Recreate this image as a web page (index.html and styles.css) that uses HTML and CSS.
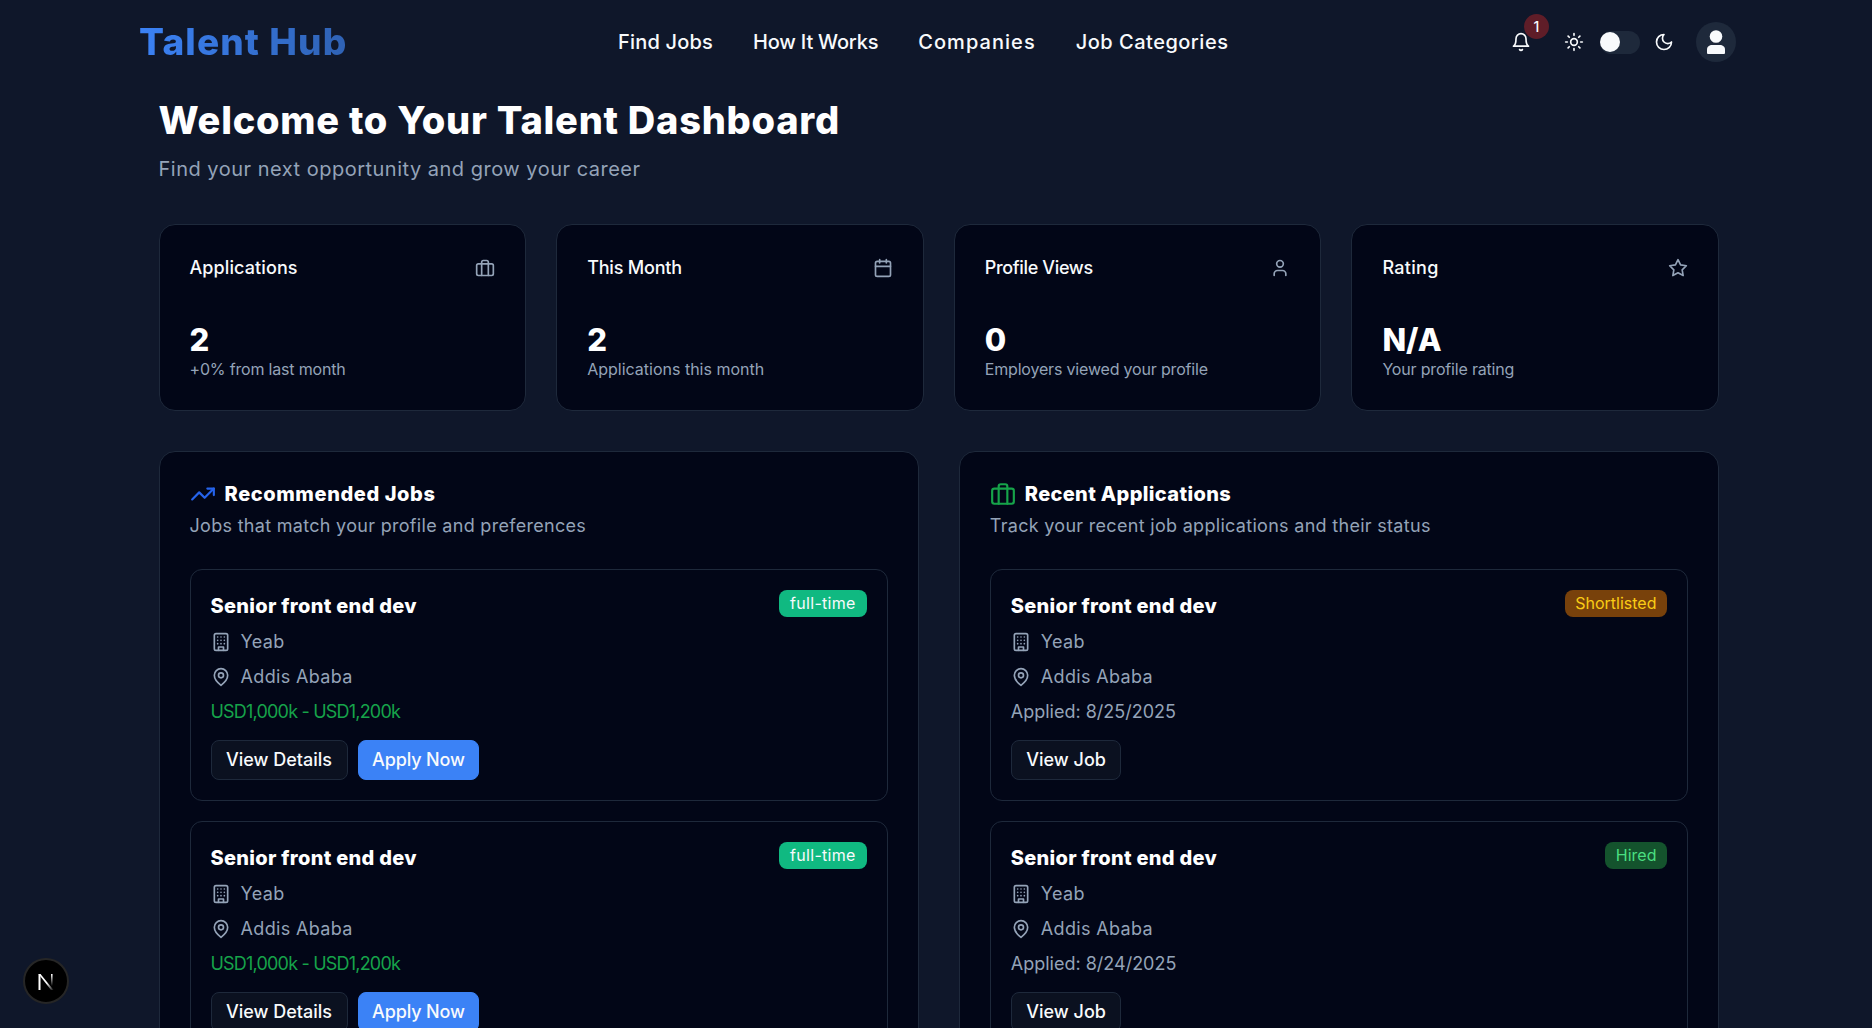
FILE: index.html
```html
<!DOCTYPE html>
<html>
<head>
<meta name="viewport" content="width=device-width, initial-scale=1">
<title>Talent Hub</title>
<link rel="stylesheet" href="styles.css">
</head>
<body>

<svg class="sprites" xmlns="http://www.w3.org/2000/svg">
  <symbol id="i-bell" viewBox="0 0 24 24"><path d="M6 8a6 6 0 0 1 12 0c0 7 3 9 3 9H3s3-2 3-9"/><path d="M10.3 21a1.94 1.94 0 0 0 3.4 0"/></symbol>
  <symbol id="i-sun" viewBox="0 0 24 24"><circle cx="12" cy="12" r="4"/><path d="M12 2v2"/><path d="M12 20v2"/><path d="m4.93 4.93 1.41 1.41"/><path d="m17.66 17.66 1.41 1.41"/><path d="M2 12h2"/><path d="M20 12h2"/><path d="m6.34 17.66-1.41 1.41"/><path d="m19.07 4.93-1.41 1.41"/></symbol>
  <symbol id="i-moon" viewBox="0 0 24 24"><path d="M12 3a6 6 0 0 0 9 9 9 9 0 1 1-9-9Z"/></symbol>
  <symbol id="i-briefcase" viewBox="0 0 24 24"><rect width="20" height="14" x="2" y="7" rx="2" ry="2"/><path d="M16 21V5a2 2 0 0 0-2-2h-4a2 2 0 0 0-2 2v16"/></symbol>
  <symbol id="i-calendar" viewBox="0 0 24 24"><rect width="18" height="18" x="3" y="4" rx="2" ry="2"/><path d="M16 2v4"/><path d="M8 2v4"/><path d="M3 10h18"/></symbol>
  <symbol id="i-user" viewBox="0 0 24 24"><path d="M19 21v-2a4 4 0 0 0-4-4H9a4 4 0 0 0-4 4v2"/><circle cx="12" cy="7" r="4"/></symbol>
  <symbol id="i-star" viewBox="0 0 24 24"><polygon points="12 2 15.09 8.26 22 9.27 17 14.14 18.18 21.02 12 17.77 5.82 21.02 7 14.14 2 9.27 8.91 8.26 12 2"/></symbol>
  <symbol id="i-trending" viewBox="0 0 24 24"><polyline points="22 7 13.5 15.5 8.5 10.5 2 17"/><polyline points="16 7 22 7 22 13"/></symbol>
  <symbol id="i-building" viewBox="0 0 24 24"><rect width="16" height="20" x="4" y="2" rx="2" ry="2"/><path d="M9 22v-4h6v4"/><path d="M8 6h.01"/><path d="M16 6h.01"/><path d="M12 6h.01"/><path d="M12 10h.01"/><path d="M12 14h.01"/><path d="M16 10h.01"/><path d="M16 14h.01"/><path d="M8 10h.01"/><path d="M8 14h.01"/></symbol>
  <symbol id="i-pin" viewBox="0 0 24 24"><path d="M20 10c0 6-8 12-8 12s-8-6-8-12a8 8 0 0 1 16 0Z"/><circle cx="12" cy="10" r="3"/></symbol>
</svg>

<header class="topbar">
  <a class="logo" href="#">Talent Hub</a>
  <nav class="nav">
    <a href="#">Find Jobs</a>
    <a href="#">How It Works</a>
    <a href="#">Companies</a>
    <a href="#">Job Categories</a>
  </nav>
  <div class="actions">
    <div class="bell">
      <svg class="icon icon-20"><use href="#i-bell"/></svg>
      <span class="bell-count">1</span>
    </div>
    <svg class="icon icon-20 sun"><use href="#i-sun"/></svg>
    <div class="toggle"><span class="knob"></span></div>
    <svg class="icon icon-20 moon"><use href="#i-moon"/></svg>
    <div class="avatar">
      <svg width="24" height="24" viewBox="0 0 24 24" fill="#f8fafc"><circle cx="12" cy="6.5" r="6.3"/><path d="M3 23v-3.500C3 16.500 5.500 15 8 15h8c2.500 0 5 1.500 5 4.500V23a1 1 0 0 1-1 1H4a1 1 0 0 1-1-1Z"/></svg>
    </div>
  </div>
</header>

<main class="page">
  <h1 class="title">Welcome to Your Talent Dashboard</h1>
  <p class="subtitle">Find your next opportunity and grow your career</p>

  <section class="stats">
    <div class="stat">
      <div class="stat-top"><span class="stat-label">Applications</span><svg class="icon icon-20"><use href="#i-briefcase"/></svg></div>
      <div class="stat-value">2</div>
      <div class="stat-note">+0% from last month</div>
    </div>
    <div class="stat">
      <div class="stat-top"><span class="stat-label">This Month</span><svg class="icon icon-20"><use href="#i-calendar"/></svg></div>
      <div class="stat-value">2</div>
      <div class="stat-note">Applications this month</div>
    </div>
    <div class="stat">
      <div class="stat-top"><span class="stat-label">Profile Views</span><svg class="icon icon-20"><use href="#i-user"/></svg></div>
      <div class="stat-value">0</div>
      <div class="stat-note">Employers viewed your profile</div>
    </div>
    <div class="stat">
      <div class="stat-top"><span class="stat-label">Rating</span><svg class="icon icon-20"><use href="#i-star"/></svg></div>
      <div class="stat-value">N/A</div>
      <div class="stat-note">Your profile rating</div>
    </div>
  </section>

  <section class="panels">
    <div class="panel">
      <h2 class="panel-title"><svg class="icon panel-icon blue"><use href="#i-trending"/></svg>Recommended Jobs</h2>
      <p class="panel-sub">Jobs that match your profile and preferences</p>

      <div class="job">
        <div class="job-top"><h3>Senior front end dev</h3><span class="tag tag-type">full-time</span></div>
        <div class="job-line"><svg class="icon icon-18"><use href="#i-building"/></svg>Yeab</div>
        <div class="job-line"><svg class="icon icon-18"><use href="#i-pin"/></svg>Addis Ababa</div>
        <div class="job-line salary">USD1,000k - USD1,200k</div>
        <div class="job-btns"><a class="btn" href="#">View Details</a><a class="btn btn-blue" href="#">Apply Now</a></div>
      </div>

      <div class="job">
        <div class="job-top"><h3>Senior front end dev</h3><span class="tag tag-type">full-time</span></div>
        <div class="job-line"><svg class="icon icon-18"><use href="#i-building"/></svg>Yeab</div>
        <div class="job-line"><svg class="icon icon-18"><use href="#i-pin"/></svg>Addis Ababa</div>
        <div class="job-line salary">USD1,000k - USD1,200k</div>
        <div class="job-btns"><a class="btn" href="#">View Details</a><a class="btn btn-blue" href="#">Apply Now</a></div>
      </div>
    </div>

    <div class="panel">
      <h2 class="panel-title"><svg class="icon panel-icon green"><use href="#i-briefcase"/></svg>Recent Applications</h2>
      <p class="panel-sub">Track your recent job applications and their status</p>

      <div class="job">
        <div class="job-top"><h3>Senior front end dev</h3><span class="tag tag-short">Shortlisted</span></div>
        <div class="job-line"><svg class="icon icon-18"><use href="#i-building"/></svg>Yeab</div>
        <div class="job-line"><svg class="icon icon-18"><use href="#i-pin"/></svg>Addis Ababa</div>
        <div class="job-line applied">Applied: 8/25/2025</div>
        <div class="job-btns"><a class="btn" href="#">View Job</a></div>
      </div>

      <div class="job">
        <div class="job-top"><h3>Senior front end dev</h3><span class="tag tag-hired">Hired</span></div>
        <div class="job-line"><svg class="icon icon-18"><use href="#i-building"/></svg>Yeab</div>
        <div class="job-line"><svg class="icon icon-18"><use href="#i-pin"/></svg>Addis Ababa</div>
        <div class="job-line applied">Applied: 8/24/2025</div>
        <div class="job-btns"><a class="btn" href="#">View Job</a></div>
      </div>
    </div>
  </section>
</main>

<div class="dev-badge">
  <svg width="20" height="20" viewBox="0 0 20 20">
    <defs>
      <linearGradient id="n-diag" gradientUnits="userSpaceOnUse" x1="3" y1="3" x2="17" y2="19"><stop offset="0.55" stop-color="#fff"/><stop offset="1" stop-color="#fff" stop-opacity="0.1"/></linearGradient>
      <linearGradient id="n-right" gradientUnits="userSpaceOnUse" x1="0" y1="3" x2="0" y2="15"><stop offset="0" stop-color="#fff"/><stop offset="1" stop-color="#fff" stop-opacity="0"/></linearGradient>
    </defs>
    <path d="M2.500 3h2v16h-2Z" fill="#fff"/>
    <path d="M2.500 3h2L17.500 19h-2.500Z" fill="url(#n-diag)"/>
    <path d="M15 3h1.600v12H15Z" fill="url(#n-right)"/>
  </svg>
</div>

</body>
</html>
```

FILE: styles.css
```css
* {
  box-sizing: border-box;
}

html, body {
  margin: 0;
  height: 100%;
  overflow: hidden;
}

body {
  background-color: #0f172a;
  color: #f8fafc;
  font-family: "Inter", "Liberation Sans", sans-serif;
}

a {
  color: inherit;
  text-decoration: none;
}

h1, h2, h3, p {
  margin: 0;
}

.sprites {
  display: none;
}

.icon {
  fill: none;
  stroke: currentColor;
  stroke-width: 2;
  stroke-linecap: round;
  stroke-linejoin: round;
  flex-shrink: 0;
}

.icon-20 {
  width: 20px;
  height: 20px;
}

.icon-18 {
  width: 20px;
  height: 20px;
  color: #94a3b8;
}

/* top bar */
.topbar {
  height: 84px;
  display: flex;
  align-items: center;
  padding: 0 136px 0 139px;
}

.logo {
  width: 208px;
  margin-bottom: 2px;
  font-size: 37px;
  font-weight: 800;
  white-space: nowrap;
  letter-spacing: 1.1px;
  background: linear-gradient(90deg, #3b82f6, #2f62b4);
  -webkit-background-clip: text;
  background-clip: text;
  color: transparent;
}

.nav {
  display: flex;
  gap: 40px;
  margin-left: 271px;
  font-size: 20px;
  font-weight: 500;
}

/* widths of the four links */
.nav a:nth-child(1) { letter-spacing: 0.2px; }
.nav a:nth-child(2) { letter-spacing: -0.2px; }
.nav a:nth-child(3) { letter-spacing: 1.05px; }
.nav a:nth-child(4) { letter-spacing: 0.5px; }

.actions {
  display: flex;
  align-items: center;
  margin-left: auto;
}

.bell {
  position: relative;
  width: 20px;
  height: 20px;
  margin-right: 33px;
}

.bell-count {
  position: absolute;
  left: 13px;
  top: -18px;
  width: 25px;
  height: 25px;
  border-radius: 50%;
  background-color: #5f1d28;
  font-size: 14px;
  font-weight: 500;
  display: flex;
  align-items: center;
  justify-content: center;
}

.sun {
  margin-right: 16px;
}

.toggle {
  width: 40px;
  height: 23px;
  border-radius: 12px;
  background-color: #1e293b;
  display: flex;
  align-items: center;
  margin-right: 14px;
}

.knob {
  width: 20px;
  height: 20px;
  border-radius: 50%;
  background-color: #f8fafc;
}

.moon {
  margin-right: 22px;
}

.avatar {
  width: 40px;
  height: 40px;
  border-radius: 50%;
  background-color: #1e293b;
  display: flex;
  align-items: center;
  justify-content: center;
}

/* page */
.page {
  padding: 12px 153px 0 158.5px;
}

.title {
  font-size: 38px;
  line-height: 48px;
  font-weight: 800;
  letter-spacing: 0.75px;
  color: #fff;
}

.subtitle {
  margin-top: 10px;
  font-size: 20px;
  line-height: 31px;
  letter-spacing: 0.5px;
  color: #94a3b8;
}

.stats {
  margin-top: 39px;
  display: grid;
  grid-template-columns: repeat(4, 1fr);
  gap: 30px;
}

.stat {
  height: 187px;
  padding: 30px;
  background-color: #020617;
  border: 1px solid #1e293b;
  border-radius: 16px;
}

.stat-top {
  display: flex;
  justify-content: space-between;
  align-items: center;
  height: 26px;
  color: #94a3b8;
}

.stat-label {
  margin-bottom: 2px;
  font-size: 18px;
  font-weight: 500;
  letter-spacing: 0.1px;
  color: #f8fafc;
}

.stat:nth-child(2) .stat-label { letter-spacing: -0.2px; }
.stat:nth-child(3) .stat-label { letter-spacing: -0.35px; }
.stat:nth-child(4) .stat-label { letter-spacing: 0.3px; }

.stat-value {
  margin-top: 41px;
  font-size: 31px;
  line-height: 36px;
  font-weight: 800;
  color: #fff;
}

.stat-note {
  margin-top: -1px;
  font-size: 16px;
  line-height: 24px;
  letter-spacing: -0.18px;
  color: #94a3b8;
}

.stat:nth-child(2) .stat-note { letter-spacing: 0; }

.panels {
  margin-top: 40px;
  display: grid;
  grid-template-columns: 1fr 1fr;
  gap: 40px;
}

.panel {
  padding: 30px;
  background-color: #020617;
  border: 1px solid #1e293b;
  border-radius: 16px;
}

.panel-title {
  display: flex;
  align-items: center;
  gap: 9px;
  margin-top: -1px;
  font-size: 20px;
  line-height: 26px;
  font-weight: 800;
  letter-spacing: 0.6px;
  color: #fff;
}

.panel:nth-child(2) .panel-title {
  letter-spacing: 0.35px;
}

.panel-icon {
  width: 26px;
  height: 26px;
}

.blue {
  color: #2563eb;
}

.green {
  color: #16a34a;
}

.panel-sub {
  margin-top: 6px;
  font-size: 18px;
  line-height: 26px;
  letter-spacing: 0.3px;
  color: #94a3b8;
}

.job {
  margin-top: 20px;
  height: 232px;
  padding: 20px;
  border: 1px solid #1e293b;
  border-radius: 12px;
}

.panel-sub + .job {
  margin-top: 30px;
}

.job-top {
  display: flex;
  justify-content: space-between;
  align-items: flex-start;
  height: 34px;
}

.job-top h3 {
  font-size: 20px;
  line-height: 32px;
  font-weight: 800;
  letter-spacing: 0.3px;
  color: #fff;
}

.tag {
  height: 27px;
  padding: 0 10.5px;
  border-radius: 8px;
  font-size: 16px;
  line-height: 27px;
}

.tag-type {
  padding: 0 11px;
  background-color: #10b981;
  letter-spacing: 0.3px;
  color: #f8fafc;
}

.tag-short {
  background-color: #78410b;
  color: #facc15;
}

.tag-hired {
  background-color: #14532d;
  color: #4ade80;
}

.job-line {
  display: flex;
  align-items: center;
  gap: 10px;
  height: 35px;
  font-size: 18px;
  letter-spacing: 0.35px;
  color: #94a3b8;
}

.salary {
  letter-spacing: -0.8px;
  color: #16a34a;
}

.applied {
  letter-spacing: 0;
}

.job-btns {
  margin-top: 11px;
  display: flex;
  gap: 10px;
}

.btn {
  height: 40px;
  padding: 0 14.5px;
  border: 1px solid #1e293b;
  border-radius: 8px;
  background-color: #0b1120;
  font-size: 18px;
  font-weight: 500;
  line-height: 38px;
  color: #f8fafc;
}

.btn-blue {
  padding: 0 13.5px;
  border-color: #3b82f6;
  background-color: #3b82f6;
  letter-spacing: -0.15px;
}

.dev-badge {
  position: fixed;
  left: 23px;
  top: 958px;
  width: 46px;
  height: 46px;
  border-radius: 50%;
  background-color: #000;
  border: 2px solid #262626;
  display: flex;
  align-items: center;
  justify-content: center;
}
```
